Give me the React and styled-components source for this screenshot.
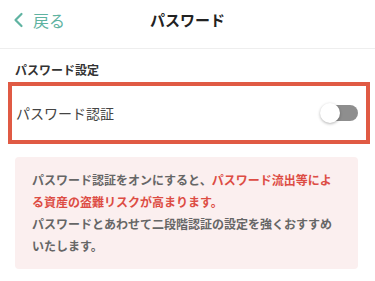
import React, { useState } from 'react';
import styled, { createGlobalStyle } from 'styled-components';

const GlobalStyle = createGlobalStyle`
  body {
    margin: 0;
    background: #fff;
    font-family: "Noto Sans CJK JP", "Noto Sans", sans-serif;
    color: #333;
  }
`;

const Header = styled.header`
  position: relative;
  height: 48px;
  display: flex;
  align-items: center;
  justify-content: center;
  border-bottom: 1px solid #eeeeee;
`;

const BackButton = styled.button`
  position: absolute;
  left: 13px;
  top: 8px;
  display: flex;
  align-items: center;
  gap: 9px;
  border: none;
  background: none;
  padding: 0;
  color: #5fb3a1;
  font-family: inherit;
  font-size: 16px;
  cursor: pointer;
`;

const Title = styled.h1`
  margin: 0 0 10px;
  font-size: 15px;
  font-weight: 700;
  color: #222;
`;

const Section = styled.section`
  padding: 12px 0 0;
`;

const SectionLabel = styled.div`
  padding: 0 15px;
  font-size: 12px;
  font-weight: 700;
  color: #333;
  line-height: 18px;
`;

const HighlightRow = styled.div`
  margin: 3px 5px 0 8px;
  height: 54px;
  border: 4px solid #e05a44;
  display: flex;
  align-items: center;
  justify-content: space-between;
  padding: 0 8px 0 4px;
`;

const RowLabel = styled.span`
  font-size: 14px;
  color: #444;
`;

const Track = styled.button`
  position: relative;
  width: 36px;
  height: 16px;
  border: none;
  border-radius: 8px;
  background: ${(p) => (p.on ? '#5fb3a1' : '#8e8e8e')};
  padding: 0;
  cursor: pointer;
`;

const Knob = styled.span`
  position: absolute;
  top: -2px;
  left: ${(p) => (p.on ? '16px' : '-2px')};
  width: 20px;
  height: 20px;
  border-radius: 50%;
  background: #fff;
  box-shadow: 0 1px 3px rgba(0, 0, 0, 0.3);
`;

const Note = styled.div`
  margin: 13px 17px 0 15px;
  padding: 12px 17px 12px;
  background: #fbefef;
  border-radius: 4px;
  font-size: 12px;
  line-height: 22px;
  font-weight: 700;
  color: #666;
`;

const Warn = styled.span`
  color: #dd4c44;
`;

export default function App() {
  const [on, setOn] = useState(false);
  return (
    <>
      <GlobalStyle />
      <Header>
        <BackButton>
          <svg width="11" height="16" viewBox="0 0 11 16">
            <path d="M8.5 2 L2.5 8 L8.5 14" fill="none" stroke="#5fb3a1" strokeWidth="2.2" strokeLinecap="round" strokeLinejoin="round" />
          </svg>
          戻る
        </BackButton>
        <Title>パスワード</Title>
      </Header>
      <Section>
        <SectionLabel>パスワード設定</SectionLabel>
        <HighlightRow>
          <RowLabel>パスワード認証</RowLabel>
          <Track on={on} onClick={() => setOn(!on)}>
            <Knob on={on} />
          </Track>
        </HighlightRow>
        <Note>
          パスワード認証をオンにすると、<Warn>パスワード流出等による資産の盗難リスクが高まります。</Warn>
          <br />
          パスワードとあわせて二段階認証の設定を強くおすすめいたします。
        </Note>
      </Section>
    </>
  );
}
